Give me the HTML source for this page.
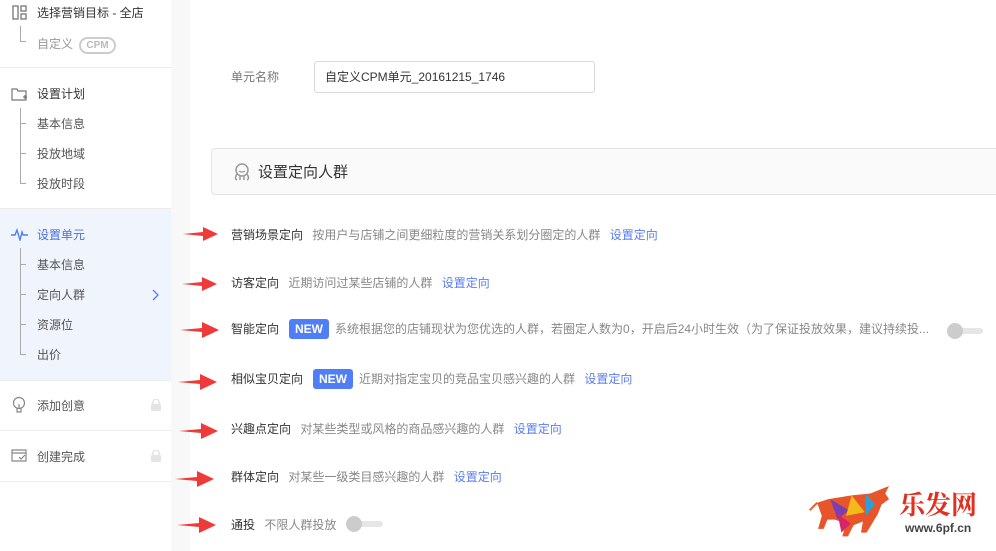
<!DOCTYPE html>
<html><head><meta charset="utf-8"><style>
*{margin:0;padding:0;box-sizing:border-box}
body{width:996px;height:551px;overflow:hidden;background:#fff;font-family:"Liberation Sans","Noto Sans CJK SC",sans-serif;font-size:12px;color:#333;position:relative}
.a{position:absolute;white-space:nowrap}
.side{position:absolute;left:0;top:0;width:171px;height:551px;background:#fff}
.strip{position:absolute;left:171px;top:0;width:19px;height:551px;background:#f8f8f8}
.sep{position:absolute;left:0;width:171px;height:1px;background:#ececec}
.s{position:absolute;left:37px;font-size:12px;color:#555}
.vl{position:absolute;left:20px;width:1px;background:#aaa}
.tk{position:absolute;left:20px;width:6px;height:1px;background:#aaa}
.lk{color:#5b7cf0}
.gr{color:#888}
.nw{display:inline-block;background:#4f7ef7;color:#fff;font-weight:bold;font-size:12px;border-radius:3px;padding:0 6px;height:20px;line-height:20px;margin:0 6px}
</style></head><body>
<div class="side"></div>
<div class="strip"></div>
<div class="a" style="left:0;top:208px;width:171px;height:172px;background:#f0f4fd"></div>
<svg class="a" style="left:12px;top:5px" width="16" height="15" viewBox="0 0 16 15"><rect x="1" y="1" width="5" height="13" fill="none" stroke="#777" stroke-width="1.3"/><rect x="9" y="1" width="5" height="5" fill="none" stroke="#777" stroke-width="1.3"/><rect x="9" y="9" width="5" height="5" fill="none" stroke="#777" stroke-width="1.3"/></svg>
<div class="s" style="top:4px;color:#333">选择营销目标 - 全店</div>
<div class="vl" style="top:26px;height:15px"></div><div class="tk" style="top:41px"></div>
<div class="s" style="top:35px;color:#999">自定义 <span style="display:inline-block;border:2px solid #ccc;border-radius:9px;color:#bbb;font-weight:bold;font-size:10px;padding:0 5px;line-height:13px;margin-left:3px">CPM</span></div>
<div class="sep" style="top:67px"></div>
<svg class="a" style="left:11px;top:87px" width="17" height="15" viewBox="0 0 17 15"><path d="M1 2h5l1 2h8v9H1z" fill="none" stroke="#777" stroke-width="1.2"/><path d="M12 10h4M14 8v4" stroke="#777" stroke-width="1.2"/></svg>
<div class="s" style="top:85px;color:#333">设置计划</div>
<div class="vl" style="top:108px;height:76px"></div>
<div class="tk" style="top:123px"></div><div class="tk" style="top:153px"></div><div class="tk" style="top:183px"></div>
<div class="s" style="top:115px">基本信息</div>
<div class="s" style="top:145px">投放地域</div>
<div class="s" style="top:175px">投放时段</div>
<div class="sep" style="top:208px"></div>
<svg class="a" style="left:11px;top:227px" width="18" height="14" viewBox="0 0 18 14"><path d="M0 8h4l2-5 3 10 2-8 1 3h5" fill="none" stroke="#4f7ef7" stroke-width="1.4"/></svg>
<div class="s" style="top:226px;color:#4f6fe0">设置单元</div>
<div class="vl" style="top:248px;height:107px"></div>
<div class="tk" style="top:264px"></div><div class="tk" style="top:294px"></div><div class="tk" style="top:324px"></div><div class="tk" style="top:354px"></div>
<div class="s" style="top:256px">基本信息</div>
<div class="s" style="top:286px">定向人群</div>
<svg class="a" style="left:150px;top:288px" width="10" height="14" viewBox="0 0 10 14"><path d="M3 2l5 5-5 5" fill="none" stroke="#4f7ef7" stroke-width="1.3"/></svg>
<div class="s" style="top:316px">资源位</div>
<div class="s" style="top:346px">出价</div>
<div class="sep" style="top:380px"></div>
<svg class="a" style="left:12px;top:396px" width="14" height="18" viewBox="0 0 14 18"><circle cx="7" cy="7" r="5.5" fill="none" stroke="#888" stroke-width="1.2"/><path d="M5 12v4h4v-4M7 8v4" fill="none" stroke="#888" stroke-width="1.2"/></svg>
<div class="s" style="top:397px">添加创意</div>
<svg class="a" style="left:151px;top:399px" width="10" height="12"><rect x="0" y="5" width="10" height="7" rx="1" fill="#e4e4e4"/><path d="M2 5V3a3 3 0 016 0v2" fill="none" stroke="#e4e4e4" stroke-width="1.5"/></svg>
<div class="sep" style="top:430px"></div>
<svg class="a" style="left:11px;top:448px" width="17" height="15" viewBox="0 0 17 15"><path d="M1 2h14v11H1z M1 5h14" fill="none" stroke="#888" stroke-width="1.2"/><path d="M8 9l2 2 4-4" fill="none" stroke="#888" stroke-width="1.2"/></svg>
<div class="s" style="top:448px">创建完成</div>
<svg class="a" style="left:151px;top:450px" width="10" height="12"><rect x="0" y="5" width="10" height="7" rx="1" fill="#e4e4e4"/><path d="M2 5V3a3 3 0 016 0v2" fill="none" stroke="#e4e4e4" stroke-width="1.5"/></svg>
<div class="sep" style="top:481px"></div>

<div class="a" style="left:231px;top:68px;color:#777">单元名称</div>
<div class="a" style="left:314px;top:61px;width:281px;height:32px;border:1px solid #d9d9d9;border-radius:3px;padding:0 10px;line-height:30px;color:#333">自定义CPM单元_20161215_1746</div>
<div class="a" style="left:211px;top:148px;width:800px;height:47px;border:1px solid #e3e3e3;border-radius:4px;background:#fafafa"></div>
<svg class="a" style="left:232px;top:162px" width="20" height="20" viewBox="0 0 20 20"><circle cx="10" cy="8" r="6" fill="none" stroke="#999" stroke-width="1.5"/><path d="M5 12c-2 3-2 5 0 6M15 12c2 3 2 5 0 6M8 13v5M12 13v5" fill="none" stroke="#999" stroke-width="1.5"/><path d="M7 9q3 2 6 0" fill="none" stroke="#999" stroke-width="1.3"/></svg>
<div class="a" style="left:258px;top:161px;font-size:15px;color:#333">设置定向人群</div>

<div class="a" style="left:231px;top:226px">营销场景定向 <span class="gr" style="margin-left:6px">按用户与店铺之间更细粒度的营销关系划分圈定的人群</span> <span class="lk" style="margin-left:6px">设置定向</span></div>
<div class="a" style="left:231px;top:274px">访客定向 <span class="gr" style="margin-left:6px">近期访问过某些店铺的人群</span> <span class="lk" style="margin-left:6px">设置定向</span></div>
<div class="a" style="left:231px;top:319px;line-height:20px">智能定向<span class="nw" style="margin-left:10px">NEW</span><span class="gr">系统根据您的店铺现状为您优选的人群，若圈定人数为0，开启后24小时生效（为了保证投放效果，建议持续投...</span></div>
<div class="a" style="left:231px;top:369px;line-height:20px">相似宝贝定向<span class="nw" style="margin-left:10px">NEW</span><span class="gr">近期对指定宝贝的竞品宝贝感兴趣的人群</span> <span class="lk" style="margin-left:6px">设置定向</span></div>
<div class="a" style="left:231px;top:420px">兴趣点定向 <span class="gr" style="margin-left:6px">对某些类型或风格的商品感兴趣的人群</span> <span class="lk" style="margin-left:6px">设置定向</span></div>
<div class="a" style="left:231px;top:468px">群体定向 <span class="gr" style="margin-left:6px">对某些一级类目感兴趣的人群</span> <span class="lk" style="margin-left:6px">设置定向</span></div>
<div class="a" style="left:231px;top:516px">通投 <span class="gr" style="margin-left:6px">不限人群投放</span></div>
<div class="a" style="left:950px;top:328px;width:33px;height:6px;border-radius:3px;background:#e6e6e6"></div>
<div class="a" style="left:947px;top:323px;width:16px;height:16px;border-radius:50%;background:#ccc"></div>
<div class="a" style="left:349px;top:521px;width:34px;height:6px;border-radius:3px;background:#e6e6e6"></div>
<div class="a" style="left:346px;top:516px;width:16px;height:16px;border-radius:50%;background:#ccc"></div>

<svg class="a" style="left:183px;top:227px" width="36" height="14"><path d="M0 7L20 5V0L35 7L20 14V9Z" fill="#f03a3a"/></svg>
<svg class="a" style="left:182px;top:277px" width="36" height="14"><path d="M0 7L20 5V0L35 7L20 14V9Z" fill="#f03a3a"/></svg>
<svg class="a" style="left:180px;top:322px" width="40" height="16"><path d="M0 8L22 6V0L39 8L22 16V10Z" fill="#f03a3a"/></svg>
<svg class="a" style="left:178px;top:374px" width="40" height="16"><path d="M0 8L22 6V0L39 8L22 16V10Z" fill="#f03a3a"/></svg>
<svg class="a" style="left:179px;top:423px" width="40" height="16"><path d="M0 8L22 6V0L39 8L22 16V10Z" fill="#f03a3a"/></svg>
<svg class="a" style="left:175px;top:471px" width="40" height="16"><path d="M0 8L22 6V0L39 8L22 16V10Z" fill="#f03a3a"/></svg>
<svg class="a" style="left:177px;top:517px" width="40" height="16"><path d="M0 8L22 6V0L39 8L22 16V10Z" fill="#f03a3a"/></svg>

<svg class="a" style="left:808px;top:486px" width="92" height="56" viewBox="0 0 95 60"><path d="M8 18l12-4 25-4 20-2 10-4 10-4-4 8 4 6-8 6-4 10-6 10-6 10h-6l2-12-10 4-6 12h-6l4-14-12-4-8 0-4 10h-6l4-14z" fill="#e8552a"/><path d="M22 14l20 12-12 10z" fill="#7a3fb0"/><path d="M45 10l14 18-20 4z" fill="#f5b91a"/><path d="M60 8l10 12-10 12z" fill="#2a9fd8"/><path d="M30 30l14 10-10 10z" fill="#d8246a"/><path d="M8 18L0 26" stroke="#e8552a" stroke-width="2"/></svg>
<div class="a" style="left:899px;top:485px;font-size:26px;color:#e03020;font-weight:bold;font-family:'Noto Serif CJK SC',serif">乐发网</div>
<div class="a" style="left:905px;top:521px;font-size:12px;font-weight:bold;color:#444">www.6pf.cn</div>
</body></html>
